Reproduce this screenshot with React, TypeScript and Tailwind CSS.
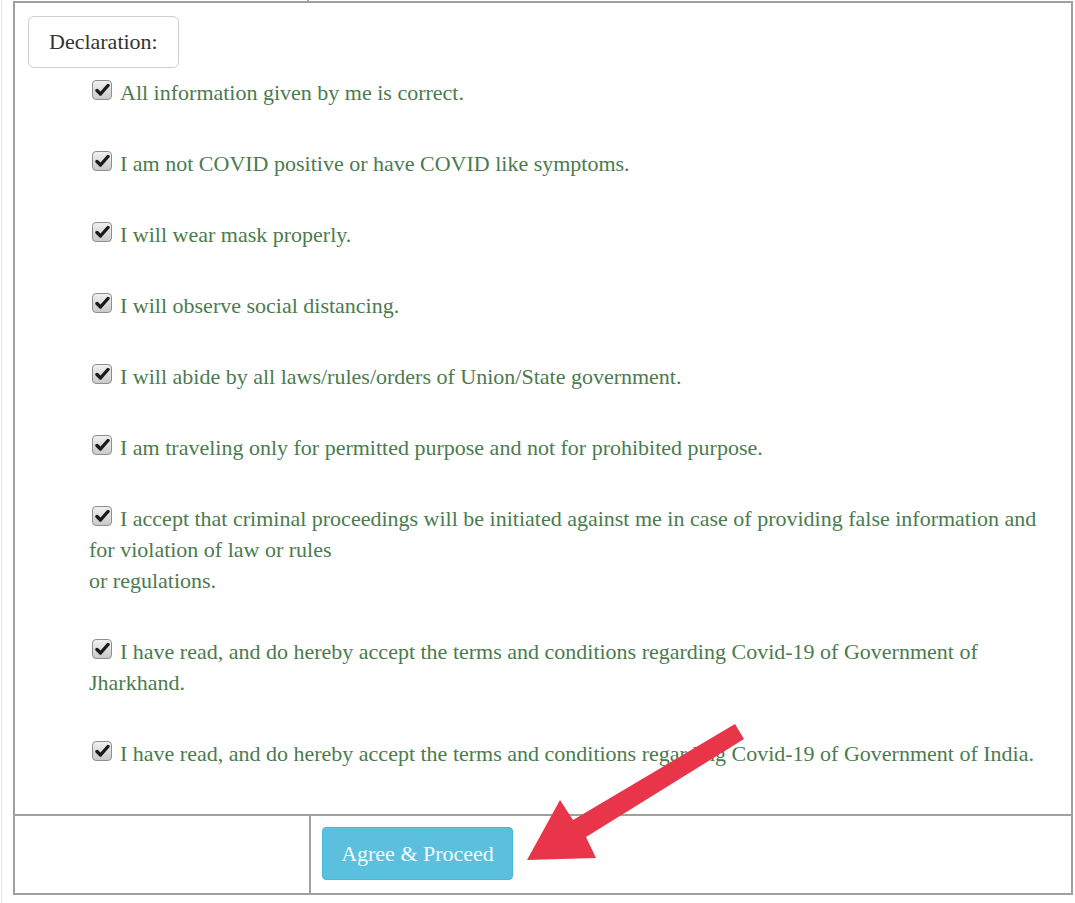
import React from 'react';

const items: React.ReactNode[] = [
  'All information given by me is correct.',
  'I am not COVID positive or have COVID like symptoms.',
  'I will wear mask properly.',
  'I will observe social distancing.',
  'I will abide by all laws/rules/orders of Union/State government.',
  'I am traveling only for permitted purpose and not for prohibited purpose.',
  <>
    I accept that criminal proceedings will be initiated against me in case of providing false information and
    <br />
    for violation of law or rules
    <br />
    or regulations.
  </>,
  <>
    I have read, and do hereby accept the terms and conditions regarding Covid-19 of Government of
    <br />
    Jharkhand.
  </>,
  'I have read, and do hereby accept the terms and conditions regarding Covid-19 of Government of India.',
];

function CheckBox() {
  return (
    <span className="relative top-[-3px] mr-[8px] ml-[3px] inline-flex h-[20px] w-[20px] items-center justify-center rounded-[4px] border border-[#8f8f8f] bg-gradient-to-b from-[#f0f0f0] to-[#cacaca] align-baseline">
      <svg width="15" height="14" viewBox="0 0 15 14">
        <path d="M2 7.5 L5.5 11 L13 2.5" fill="none" stroke="#1a1a1a" strokeWidth="3.4" strokeLinecap="round" strokeLinejoin="round" />
      </svg>
    </span>
  );
}

export default function App() {
  return (
    <div className="relative h-[903px] w-[1075px] overflow-hidden bg-white" style={{ fontFamily: '"Liberation Serif", "Times New Roman", serif' }}>
      <div className="absolute left-[1px] top-0 h-full w-[1px] bg-[#e4e4e4]" />

      <div className="ml-[13px] w-[1060px]">
        {/* tail of the previous row */}
        <div className="flex h-[1px]">
          <div className="w-[296px] border-r-2 border-[#a0a0a0]" />
        </div>

        {/* declaration row */}
        <div className="border-2 border-[#a0a0a0] px-[13px] pt-[13px] pb-[45px]">
          <div className="inline-block rounded-[6px] border border-[#cfcfcf] px-[20px] py-[12px] text-[22px] leading-[26px] text-[#333]">
            Declaration:
          </div>
          <div className="mt-[9px] pl-[61px] text-[22px] leading-[31px] text-[#4a7b4e]">
            {items.map((t, i) => (
              <div key={i} className="mb-[40px] last:mb-0">
                <CheckBox />
                {t}
              </div>
            ))}
          </div>
        </div>

        {/* actions row */}
        <div className="flex h-[79px] border-2 border-t-0 border-[#a0a0a0]">
          <div className="w-[296px] border-r-2 border-[#a0a0a0]" />
          <div className="flex-1 px-[11px] pt-[11px]">
            <button className="h-[53px] w-[191px] rounded-[4px] border border-[#46b8da] bg-[#5bc0de] text-[22px] text-[#f4fbfd]">
              Agree &amp; Proceed
            </button>
          </div>
        </div>
      </div>

      <svg className="pointer-events-none absolute left-0 top-0" width="1075" height="903">
        <polygon points="735,724 744,739 586,837 596,858 527,860 560,800 573,820" fill="#e8354a" />
      </svg>
    </div>
  );
}
